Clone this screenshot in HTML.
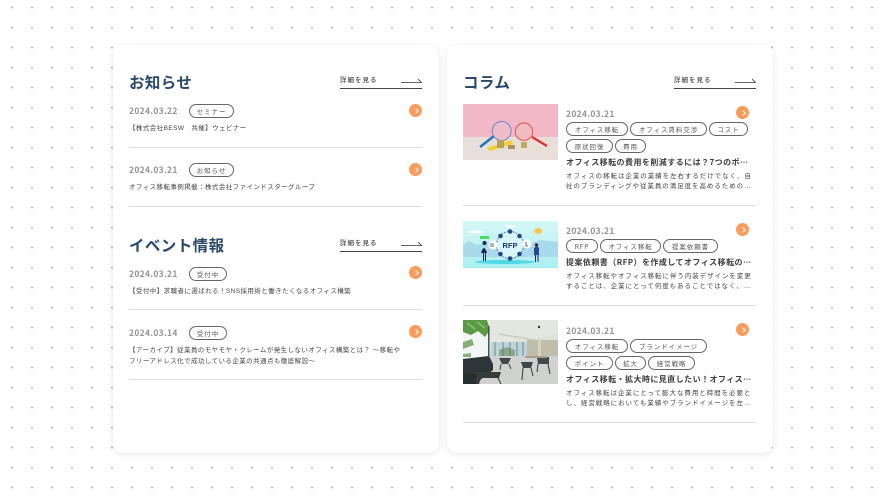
<!DOCTYPE html>
<html lang="ja"><head><meta charset="utf-8"><title>お知らせ</title>
<style>
*{box-sizing:border-box;margin:0;padding:0}
html,body{width:888px;height:499px;overflow:hidden;background:#fff}
#w{position:relative;width:888px;height:499px;overflow:hidden;filter:blur(.3px);font-family:"Liberation Sans","Noto Sans CJK JP",sans-serif;color:#4a4a4a;
background:#fff radial-gradient(circle at 12px 7.5px,#a8a8a8 0,#c0c0c0 .8px,rgba(255,255,255,0) 1.3px) 0 0/20px 20px}
.card{position:absolute;top:45px;width:326px;height:408px;background:#fff;border-radius:10px;box-shadow:0 1px 7px rgba(0,0,0,.1)}
h2{position:absolute;font-size:15.5px;line-height:20px;font-weight:700;color:#2a4a6c;letter-spacing:.4px;white-space:nowrap;font-family:"Noto Sans CJK JP",sans-serif}
.more{position:absolute;width:82px;height:17px;border-bottom:1px solid #444;font-size:6.5px;line-height:14px;letter-spacing:1px;color:#444;font-weight:500;font-family:"Noto Sans CJK JP",sans-serif}
.more svg{position:absolute;right:0;top:4px}
.date{position:absolute;font-size:8.5px;line-height:10px;font-weight:700;color:#949494;letter-spacing:.3px;white-space:nowrap;font-family:"Noto Sans CJK JP",sans-serif}
.tag{position:absolute;height:14px;border:1px solid #666;border-radius:7px;font-size:6.5px;line-height:12px;text-align:center;letter-spacing:.9px;color:#555;white-space:nowrap;background:#fff;font-family:"Noto Sans CJK JP",sans-serif}
.txt{position:absolute;font-size:6.5px;line-height:10.6px;letter-spacing:.42px;color:#444;white-space:nowrap;font-family:"Liberation Sans","Noto Sans CJK JP",sans-serif}
.col{letter-spacing:.94px;line-height:10.2px}
.hd{position:absolute;font-size:8px;line-height:12px;font-weight:700;letter-spacing:.45px;color:#3c3c3c;white-space:nowrap;font-family:"Noto Sans CJK JP",sans-serif}
.ln{position:absolute;height:1px;background:#ddd}
.dot{position:absolute;width:13px;height:13px;border-radius:50%;background:#fb9b5c}
.dot:after{content:"";position:absolute;left:4.5px;top:4.6px;width:3px;height:3px;border-top:1px solid #fff;border-right:1px solid #fff;transform:rotate(45deg)}
.th{position:absolute;left:463px;width:95px;overflow:hidden}
.th svg{display:block}
</style></head><body><div id="w">
<div class="card" style="left:113px"></div>
<div class="card" style="left:447px"></div>

<h2 style="left:129px;top:72px">お知らせ</h2>
<div class="more" style="left:340px;top:72px">詳細を見る<svg width="21" height="8"><path d="M0 6.5H20.500L17 3" fill="none" stroke="#333" stroke-width=".8"/></svg></div>
<div class="date" style="left:129px;top:106px">2024.03.22</div>
<div class="tag" style="left:189px;top:104px;width:45px">セミナー</div>
<div class="dot" style="left:409px;top:104px"></div>
<div class="txt" style="left:129px;top:124px">【株式会社BESW　共催】ウェビナー</div>
<div class="ln" style="left:129px;top:147px;width:293px"></div>
<div class="date" style="left:129px;top:164.500px">2024.03.21</div>
<div class="tag" style="left:189px;top:163px;width:45px">お知らせ</div>
<div class="dot" style="left:409px;top:163px"></div>
<div class="txt" style="left:129px;top:183px">オフィス移転事例掲載：株式会社ファインドスターグループ</div>
<div class="ln" style="left:129px;top:206px;width:293px"></div>

<h2 style="left:129px;top:235px">イベント情報</h2>
<div class="more" style="left:340px;top:235px">詳細を見る<svg width="21" height="8"><path d="M0 6.5H20.500L17 3" fill="none" stroke="#333" stroke-width=".8"/></svg></div>
<div class="date" style="left:129px;top:268.500px">2024.03.21</div>
<div class="tag" style="left:189px;top:267px;width:38px">受付中</div>
<div class="dot" style="left:409px;top:266px"></div>
<div class="txt" style="left:129px;top:287px">【受付中】求職者に選ばれる！SNS採用術と働きたくなるオフィス構築</div>
<div class="ln" style="left:129px;top:309px;width:293px"></div>
<div class="date" style="left:129px;top:327.500px">2024.03.14</div>
<div class="tag" style="left:189px;top:326px;width:38px">受付中</div>
<div class="dot" style="left:409px;top:325px"></div>
<div class="txt" style="left:129px;top:346px">【アーカイブ】従業員のモヤモヤ・クレームが発生しないオフィス構築とは？ ～移転や<br>フリーアドレス化で成功している企業の共通点も徹底解説～</div>
<div class="ln" style="left:129px;top:379px;width:293px"></div>

<h2 style="left:463px;top:72px">コラム</h2>
<div class="more" style="left:674px;top:72px">詳細を見る<svg width="21" height="8"><path d="M0 6.5H20.500L17 3" fill="none" stroke="#333" stroke-width=".8"/></svg></div>

<div class="th" style="top:104px;height:56px"><svg width="95" height="56" viewBox="0 0 95 56">
<rect width="95" height="56" fill="#f2b8c8"/><rect y="33" width="95" height="23" fill="#e9dfd9"/>
<path d="M17 43L31 32" stroke="#2070c0" stroke-width="2.4"/><path d="M69 33L84 42" stroke="#e03030" stroke-width="2.4"/>
<path d="M24 44L48 36L50 40L27 47Z" fill="#f0d030"/>
<circle cx="38.700" cy="27" r="9.500" fill="#eebccb" stroke="#6a8ac8" stroke-width="1"/><circle cx="61" cy="27.700" r="8.700" fill="#f0bcc0" stroke="#e05050" stroke-width="1"/>
<rect x="34" y="36" width="7" height="8" fill="#b8a060"/><rect x="45" y="41" width="7" height="4" fill="#a89060"/><rect x="58" y="38" width="6" height="6" fill="#c0a868"/>
</svg></div>
<div class="date" style="left:566px;top:108.500px">2024.03.21</div>
<div class="dot" style="left:736px;top:106px"></div>
<div class="tag" style="left:566px;top:122px;width:62px">オフィス移転</div>
<div class="tag" style="left:630px;top:122px;width:77px">オフィス賃料交渉</div>
<div class="tag" style="left:709px;top:122px;width:39px">コスト</div>
<div class="tag" style="left:566px;top:139px;width:47px">原状回復</div>
<div class="tag" style="left:615px;top:139px;width:31px">費用</div>
<div class="hd" style="left:566px;top:157px">オフィス移転の費用を削減するには？7つのポ…</div>
<div class="txt col" style="left:566px;top:172px">オフィスの移転は企業の業績を左右するだけでなく、自<br>社のブランディングや従業員の満足度を高めるための…</div>
<div class="ln" style="left:463px;top:205px;width:293px"></div>

<div class="th" style="top:221px;height:47px"><svg width="95" height="47" viewBox="0 0 95 47">
<defs><linearGradient id="g" x1="0" y1="0" x2="0" y2="1"><stop offset="0" stop-color="#d4f8f6"/><stop offset=".6" stop-color="#c0f0f4"/><stop offset="1" stop-color="#a8f0f0"/></linearGradient></defs>
<rect width="95" height="47" fill="url(#g)"/>
<path d="M0 24L6 20L14 24L30 20L60 24L78 19L95 21V36H0Z" fill="#a8daec"/>
<ellipse cx="42" cy="41" rx="30" ry="2" fill="#50d8e4"/>
<circle cx="47" cy="24" r="13.500" fill="#d8f6f8" stroke="#38588c" stroke-width=".7" stroke-dasharray="2 1"/>
<g fill="#28468a"><circle cx="47" cy="10.500" r="2.300"/><circle cx="37.500" cy="15" r="2.300"/><circle cx="56.500" cy="15" r="2.300"/><circle cx="37.500" cy="33" r="2.300"/><circle cx="56.500" cy="33" r="2.300"/><circle cx="47" cy="37.500" r="2.300"/></g>
<text x="47" y="27" font-size="7.500" font-weight="700" text-anchor="middle" fill="#22346c" font-family="Liberation Sans">RFP</text>
<circle cx="30" cy="24" r="4.500" fill="#fff"/><circle cx="64" cy="23" r="4.500" fill="#fff"/>
<path d="M28 22v4M30 22v4" stroke="#345" stroke-width=".8"/><path d="M63 21v4h2" stroke="#345" stroke-width=".8" fill="none"/>
<rect x="17" y="15" width="9" height="3" fill="#44e060"/>
<circle cx="21.500" cy="22" r="2" fill="#1a2a50"/><path d="M18 32q3-10 6 0Z" fill="#1a2a50"/><path d="M20.500 32v8M22.500 32v8" stroke="#1a2a50"/>
<path d="M71 27q3-3 5 0v7h-5Z" fill="#2a4a90"/><circle cx="73.500" cy="24" r="1.700" fill="#3a2a30"/><path d="M72.500 34v7M75 34v7" stroke="#1a2a50"/>
<ellipse cx="75" cy="10" rx="4" ry="3" fill="#f8c850"/><ellipse cx="13" cy="11" rx="7" ry="1.500" fill="#fff"/><ellipse cx="47" cy="5" rx="5" ry="1.200" fill="#fff"/>
</svg></div>
<div class="date" style="left:566px;top:225.500px">2024.03.21</div>
<div class="dot" style="left:736px;top:223px"></div>
<div class="tag" style="left:566px;top:239px;width:32px">RFP</div>
<div class="tag" style="left:600px;top:239px;width:61px">オフィス移転</div>
<div class="tag" style="left:663px;top:239px;width:55px">提案依頼書</div>
<div class="hd" style="left:566px;top:256.500px">提案依頼書（RFP）を作成してオフィス移転の…</div>
<div class="txt col" style="left:566px;top:271.500px">オフィス移転やオフィス移転に伴う内装デザインを変更<br>することは、企業にとって何度もあることではなく、…</div>
<div class="ln" style="left:463px;top:305px;width:293px"></div>

<div class="th" style="top:320px;height:64px"><svg width="95" height="64" viewBox="0 0 95 64">
<rect width="95" height="64" fill="#dfe2da"/>
<path d="M24 0H95V12L80 18L60 20L28 24Z" fill="#e4e7df"/>
<path d="M36 14L72 20" stroke="#c8ccc4" stroke-width="1.500"/><circle cx="76" cy="7" r="1.200" fill="#333"/>
<rect x="0" y="0" width="25" height="40" fill="#f2f6f4"/>
<rect x="28" y="22" width="38" height="14" fill="#bcd4dc"/>
<path d="M36 30l8-3 8 3v6H36Z" fill="#8aa88a"/>
<path d="M32 22V36M40 22V36M47 22V36M54 22V36M60 22V36" stroke="#5c6468" stroke-width=".7"/>
<rect x="64" y="20" width="31" height="17" fill="#c2bcaa"/><rect x="75" y="18" width="3" height="18" fill="#d6d2c4"/>
<path d="M0 0H24L27 10L22 17L15 11L8 15L0 12Z" fill="#5a9a44"/><path d="M4 3L12 9M14 2L22 8" stroke="#8cc070" stroke-width="1.500"/>
<path d="M0 22L9 19L11 25L0 29Z" fill="#86ad78"/><path d="M0 34L8 33L8 37H0Z" fill="#8ab080"/>
<rect x="25" y="6" width="1.500" height="32" fill="#4a5256"/>
<path d="M25 36H95V64H0V40Z" fill="#cfd2cf"/>
<path d="M0 39L26 36L30 44L30 50L12 64H0Z" fill="#2c3638"/>
<path d="M12 52H38L36 58H18L16 64H12Z" fill="#363c3c"/><path d="M34 56L38 64" stroke="#333"/>
<rect x="0" y="54" width="13" height="10" fill="#26302e"/>
<path d="M36 38H48L45 44H39Z" fill="#3e4a4c"/><path d="M38 44L37 50M46 44L48 49" stroke="#3a4244"/>
<path d="M58 42H70L68 48H60Z" fill="#3e484a"/><path d="M60 48L59 60M68 48L70 56" stroke="#303838"/>
<path d="M74 37H86V44H75Z" fill="#40494c"/><path d="M75 44L74 52M85 44L87 54" stroke="#303838"/>
<path d="M62 36H84V38H62Z" fill="#a99f88"/>
</svg></div>
<div class="date" style="left:566px;top:325.500px">2024.03.21</div>
<div class="dot" style="left:736px;top:323px"></div>
<div class="tag" style="left:566px;top:339px;width:62px">オフィス移転</div>
<div class="tag" style="left:630px;top:339px;width:77px">ブランドイメージ</div>
<div class="tag" style="left:566px;top:356px;width:47px">ポイント</div>
<div class="tag" style="left:615px;top:356px;width:31px">拡大</div>
<div class="tag" style="left:648px;top:356px;width:47px">経営戦略</div>
<div class="hd" style="left:566px;top:373.500px">オフィス移転・拡大時に見直したい！オフィス…</div>
<div class="txt col" style="left:566px;top:388.500px">オフィス移転は企業にとって膨大な費用と時間を必要と<br>し、経営戦略においても業績やブランドイメージを左…</div>
<div class="ln" style="left:463px;top:422px;width:293px"></div>
</div></body></html>
